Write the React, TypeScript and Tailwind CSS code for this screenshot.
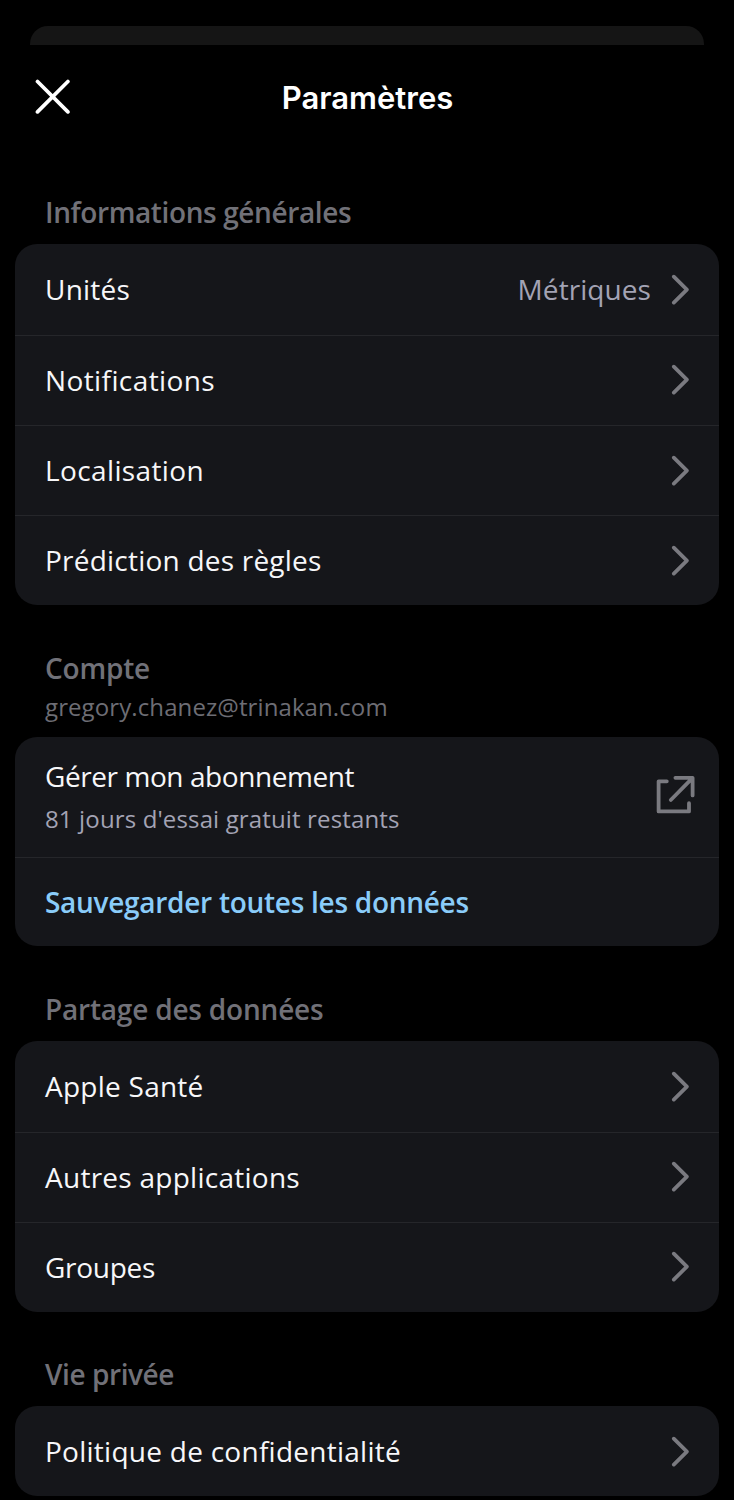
interface Item {
  label: string
  tracking: string
  value?: string
}

const general: Item[] = [
  { label: 'Unités', tracking: 'tracking-[0.23px]', value: 'Métriques' },
  { label: 'Notifications', tracking: 'tracking-[0.4px]' },
  { label: 'Localisation', tracking: 'tracking-[0.38px]' },
  { label: 'Prédiction des règles', tracking: 'tracking-[0.22px]' },
]

const sharing: Item[] = [
  { label: 'Apple Santé', tracking: 'tracking-[0.25px]' },
  { label: 'Autres applications', tracking: 'tracking-[0.26px]' },
  { label: 'Groupes', tracking: 'tracking-[-0.28px]' },
]

const privacy: Item[] = [
  { label: 'Politique de confidentialité', tracking: 'tracking-[0.26px]' },
]

function CloseIcon() {
  return (
    <svg width="36" height="36" viewBox="0 0 36 36" fill="none" stroke="#ffffff" strokeWidth="3.7" strokeLinecap="round">
      <path d="M2.5 2.5 32.9 32.9M32.9 2.5 2.5 32.9" />
    </svg>
  )
}

function ChevronIcon() {
  return (
    <svg
      className="shrink-0"
      width="18"
      height="32"
      viewBox="0 0 18 32"
      fill="none"
      stroke="#7a7a80"
      strokeWidth="3.7"
      strokeLinecap="round"
      strokeLinejoin="round"
    >
      <path d="M2.8 2.6 15.9 15.6 2.8 28.6" />
    </svg>
  )
}

function ExternalIcon() {
  return (
    <svg
      className="shrink-0"
      width="40"
      height="40"
      viewBox="0 0 40 40"
      fill="none"
      stroke="#7a7a80"
      strokeWidth="3.8"
      strokeLinecap="round"
      strokeLinejoin="round"
    >
      <path d="M11.8 6.3H3.6V36.4H34V28.2" />
      <path d="M20.4 2.8H37.6V20.4M36.6 3.8 15.8 25" />
    </svg>
  )
}

function SectionTitle({ title, tracking }: { title: string; tracking: string }) {
  return <h2 className={`pl-[30px] text-[28px] leading-[36px] font-semibold text-[#717178] ${tracking}`}>{title}</h2>
}

function Card({ children }: { children: React.ReactNode }) {
  return <div className="overflow-hidden rounded-[22px] bg-[#15161a]">{children}</div>
}

function Row({ item }: { item: Item }) {
  return (
    <div className="flex h-[90.3px] items-center justify-between border-t border-[#25262a] pr-[30px] pl-[30px] first:border-transparent">
      <span className={`pb-[1.4px] text-[28px] leading-[36px] text-[#f7f7f9] ${item.tracking}`}>{item.label}</span>
      <div className="flex items-center gap-[20px]">
        {item.value && (
          <span className="pb-[1.4px] text-[28px] leading-[36px] tracking-[0.07px] text-[#a3a3b4]">{item.value}</span>
        )}
        <ChevronIcon />
      </div>
    </div>
  )
}

export default function App() {
  return (
    <div className="h-[1500px] w-[734px] overflow-hidden bg-black pt-[26px] font-['Open_Sans',sans-serif]">
      <div className="mx-[30px] h-[18.5px] rounded-t-[18px] bg-[#151515]" />

      <header className="grid h-[105px] grid-cols-[1fr_auto_1fr] items-center pl-[35px]">
        <button className="justify-self-start" aria-label="Fermer">
          <CloseIcon />
        </button>
        <h1 className="pt-[2px] pr-[34px] font-['Inter',sans-serif] text-[31px] leading-[40px] font-semibold text-white">
          Paramètres
        </h1>
      </header>

      <main className="px-[15px] pt-[44px]">
        <section>
          <SectionTitle title="Informations générales" tracking="tracking-[-0.39px]" />
          <div className="mt-[14.8px]">
            <Card>
              {general.map((item) => (
                <Row key={item.label} item={item} />
              ))}
            </Card>
          </div>
        </section>

        <section className="mt-[44.5px]">
          <SectionTitle title="Compte" tracking="tracking-[-0.21px]" />
          <p className="mt-[4.8px] pl-[30px] text-[24px] leading-[32px] tracking-[0.1px] text-[#6d6d74]">
            gregory.chanez@trinakan.com
          </p>
          <div className="mt-[14.7px]">
            <Card>
              <div className="flex h-[119.5px] justify-between pt-[20.6px] pr-[24px] pl-[30px]">
                <div>
                  <p className="text-[28px] leading-[36px] tracking-[-0.42px] text-[#f7f7f9]">Gérer mon abonnement</p>
                  <p className="mt-[9px] text-[24px] leading-[32px] tracking-[0.14px] text-[#a3a3b4]">
                    81 jours d'essai gratuit restants
                  </p>
                </div>
                <div className="pt-[17.4px]">
                  <ExternalIcon />
                </div>
              </div>
              <div className="flex h-[89.5px] items-center border-t border-[#25262a] pl-[30px]">
                <span className="pb-px text-[28px] leading-[36px] font-semibold tracking-[-0.28px] text-[#8accf9]">
                  Sauvegarder toutes les données
                </span>
              </div>
            </Card>
          </div>
        </section>

        <section className="mt-[44.6px]">
          <SectionTitle title="Partage des données" tracking="tracking-[-0.2px]" />
          <div className="mt-[14.2px]">
            <Card>
              {sharing.map((item) => (
                <Row key={item.label} item={item} />
              ))}
            </Card>
          </div>
        </section>

        <section className="mt-[43.8px]">
          <SectionTitle title="Vie privée" tracking="tracking-[-0.42px]" />
          <div className="mt-[14.2px]">
            <Card>
              {privacy.map((item) => (
                <Row key={item.label} item={item} />
              ))}
            </Card>
          </div>
        </section>
      </main>
    </div>
  )
}
